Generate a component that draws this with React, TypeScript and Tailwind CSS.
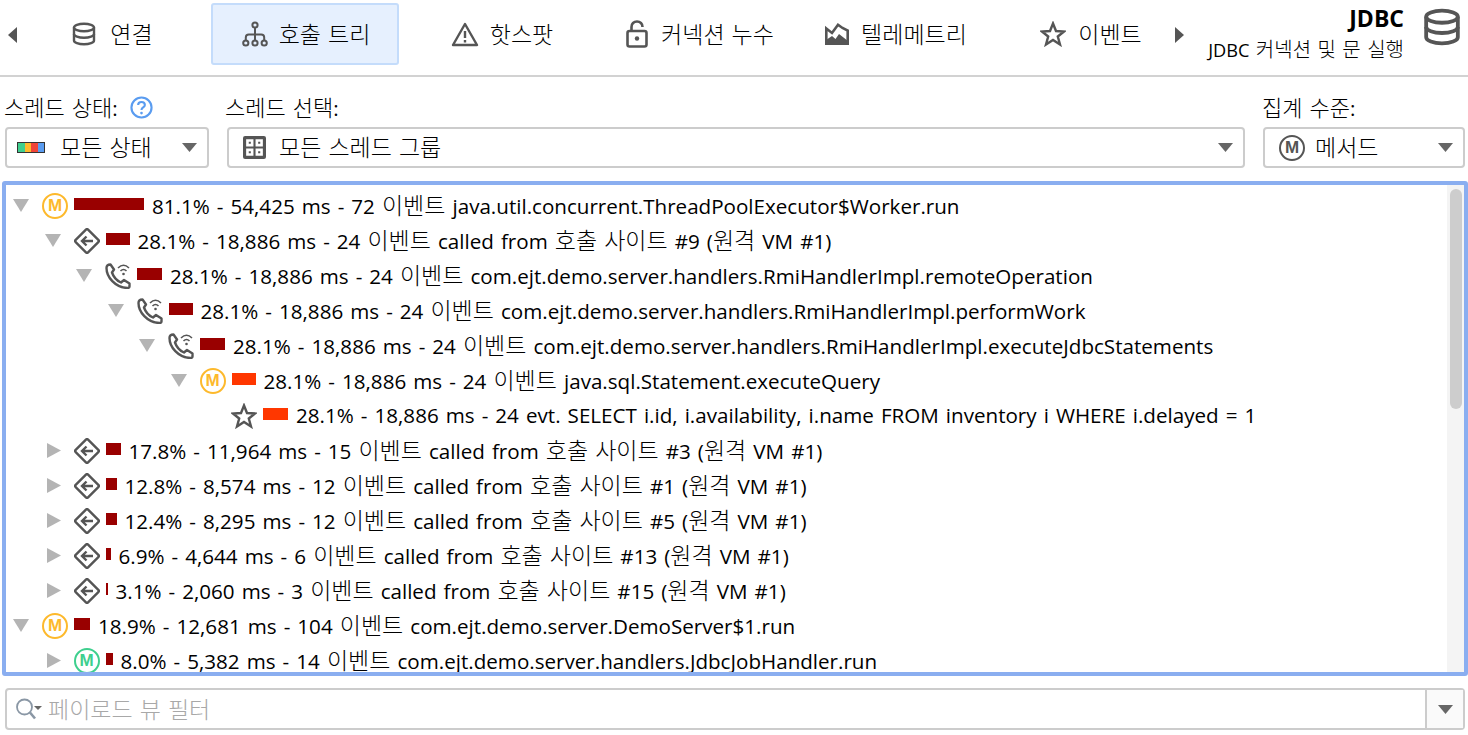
import React from "react";

const FONT = "[font-family:'Open_Sans','Noto_Sans_CJK_KR',sans-serif]";

// hangul runs are set larger than the latin text
function Ko({ text, size = "text-[23px]" }: { text: string; size?: string }): React.JSX.Element {
    const parts = text.split(/([\uac00-\ud7a3]+)/);
    return (
        <span>
            {parts.map((part, i) =>
                /[\uac00-\ud7a3]/.test(part) ? (
                    <span key={i} className={`${size} font-light`}>{part}</span>
                ) : (
                    <span key={i}>{part}</span>
                )
            )}
        </span>
    );
}

function Tri({ dir, className }: { dir: "down" | "right" | "left"; className: string }): React.JSX.Element {
    const pts = dir === "down" ? "0,0 16,0 8,16" : dir === "right" ? "0,0 16,8 0,16" : "16,0 0,8 16,16";
    return (
        <svg viewBox="0 0 16 16" preserveAspectRatio="none" className={className}>
            <polygon points={pts} fill="currentColor" />
        </svg>
    );
}

function DbIcon({ className }: { className: string }): React.JSX.Element {
    return (
        <svg viewBox="0 0 24 24" fill="none" stroke="currentColor" strokeWidth="2.4" className={className}>
            <ellipse cx="12" cy="5.5" rx="10" ry="3.8" />
            <path d="M2 5.5v13c0 2.1 4.5 3.8 10 3.8s10-1.7 10-3.8v-13" />
            <path d="M2 12c0 2.1 4.5 3.8 10 3.8s10-1.7 10-3.8" />
        </svg>
    );
}

function TreeIcon({ className }: { className: string }): React.JSX.Element {
    return (
        <svg viewBox="0 0 26 26" fill="none" stroke="currentColor" strokeWidth="2" className={className}>
            <circle cx="13" cy="4" r="2.6" />
            <circle cx="3.8" cy="22" r="2.6" />
            <circle cx="13" cy="22" r="2.6" />
            <circle cx="22.2" cy="22" r="2.6" />
            <path d="M13 7v12M3.8 19v-2.5c0-2 1-3 3-3h12.4c2 0 3 1 3 3V19" />
        </svg>
    );
}

function WarnIcon({ className }: { className: string }): React.JSX.Element {
    return (
        <svg viewBox="0 0 28 26" fill="none" className={className}>
            <path d="M14 3 L26 24 H2 Z" stroke="currentColor" strokeWidth="2.4" strokeLinejoin="round" />
            <path d="M14 10v7M14 19v2.6" stroke="currentColor" strokeWidth="2.4" />
        </svg>
    );
}

function LockIcon({ className }: { className: string }): React.JSX.Element {
    return (
        <svg viewBox="0 0 22 28" fill="none" stroke="currentColor" strokeWidth="2.6" className={className}>
            <rect x="1.5" y="11" width="19" height="15.5" rx="2" />
            <path d="M5.5 11V7c0-3.4 2.3-5.5 5.5-5.5s5.5 2.1 5.5 5.500" />
            <circle cx="11" cy="18.5" r="2.2" fill="currentColor" stroke="none" />
        </svg>
    );
}

function TelemetryIcon({ className }: { className: string }): React.JSX.Element {
    return (
        <svg viewBox="0 0 24 22" className={className}>
            <path fill="none" stroke="currentColor" strokeWidth="2.6" d="M1.300 5.500 7 10 13 1.800 17.500 5 22.700 7.500V20.700H1.300Z" />
            <path fill="currentColor" d="M1 21v-4l6-4 3.500 3L14 11l9 7v3Z" />
        </svg>
    );
}

function StarIcon({ className }: { className: string }): React.JSX.Element {
    return (
        <svg viewBox="0 0 26 26" fill="none" stroke="currentColor" strokeWidth="2.4" strokeLinejoin="miter" className={className}>
            <polygon points="13,2.500 16,10 24,10.500 17.800,15.500 20,23.500 13,19 6,23.500 8.200,15.500 2,10.500 10,10" />
        </svg>
    );
}

function MethodIcon({ className }: { className: string }): React.JSX.Element {
    return (
        <span className={`flex h-[26px] w-[26px] items-center justify-center rounded-full border-[2.5px] [font-family:'Liberation_Sans',sans-serif] text-[17px] font-bold ${className}`}>
            M
        </span>
    );
}

function CallSiteIcon({ className }: { className: string }): React.JSX.Element {
    return (
        <svg viewBox="0 0 26 26" fill="none" stroke="currentColor" strokeWidth="2.4" className={className}>
            <rect x="4.250" y="4.250" width="17.500" height="17.500" rx="1.500" transform="rotate(45 13 13)" />
            <path d="M19 13H8M12.500 8.500 8 13l4.500 4.500" />
        </svg>
    );
}

function PhoneWifiIcon({ className }: { className: string }): React.JSX.Element {
    return (
        <svg viewBox="0 0 26 26" fill="none" stroke="currentColor" className={className}>
            <path
                strokeWidth="2.400"
                strokeLinejoin="round"
                d="M5.500 1.500 9 6.500 7 9.500c1.500 4.500 4.500 8 9 10l3-2.500 5.500 3.500v3c0 1-1 1.500-2 1.500C10 24.500 1.500 14 1.500 5c0-2 1.500-3.500 4-3.500Z"
            />
            <path strokeWidth="1.600" d="M13 5c3.500-3.500 7.500-3.500 11 0M15.500 8c2-2 4-2 6 0" />
            <circle cx="18.500" cy="11" r="1.300" fill="currentColor" stroke="none" />
        </svg>
    );
}

const tabs = [
    { label: "연결", icon: <DbIcon className="h-[24px] w-[24px]" />, w: "w-[188px] pl-[7px]", gap: "gap-[14px]" },
    { label: "호출 트리", icon: <TreeIcon className="h-[26px] w-[26px]" />, w: "w-[188px] pl-[2px]", gap: "gap-[11px]", active: true },
    { label: "핫스팟", icon: <WarnIcon className="h-[26px] w-[28px]" />, w: "w-[188px] pl-[2px]", gap: "gap-[11px]" },
    { label: "커넥션 누수", icon: <LockIcon className="h-[28px] w-[22px]" />, w: "w-[188px] pl-[6px]", gap: "gap-[13px]" },
    { label: "텔레메트리", icon: <TelemetryIcon className="h-[22px] w-[24px]" />, w: "w-[188px] pl-[6px]", gap: "gap-[12px]" },
    { label: "이벤트", icon: <StarIcon className="h-[26px] w-[26px]" />, w: "w-[176px] pl-[16px]", gap: "gap-[12px]" },
];

type Row = {
    depth: number;
    open?: boolean;
    leaf?: boolean;
    icon: "mo" | "mg" | "site" | "phone" | "star";
    bar: number;
    hot?: boolean;
    text: string;
};

const rows: Row[] = [
    { depth: 0, open: true, icon: "mo", bar: 70, text: "81.1% - 54,425 ms - 72 이벤트 java.util.concurrent.ThreadPoolExecutor$Worker.run" },
    { depth: 1, open: true, icon: "site", bar: 24, text: "28.1% - 18,886 ms - 24 이벤트 called from 호출 사이트 #9 (원격 VM #1)" },
    { depth: 2, open: true, icon: "phone", bar: 25, text: "28.1% - 18,886 ms - 24 이벤트 com.ejt.demo.server.handlers.RmiHandlerImpl.remoteOperation" },
    { depth: 3, open: true, icon: "phone", bar: 24, text: "28.1% - 18,886 ms - 24 이벤트 com.ejt.demo.server.handlers.RmiHandlerImpl.performWork" },
    { depth: 4, open: true, icon: "phone", bar: 25, text: "28.1% - 18,886 ms - 24 이벤트 com.ejt.demo.server.handlers.RmiHandlerImpl.executeJdbcStatements" },
    { depth: 5, open: true, icon: "mo", bar: 24, hot: true, text: "28.1% - 18,886 ms - 24 이벤트 java.sql.Statement.executeQuery" },
    { depth: 6, leaf: true, icon: "star", bar: 25, hot: true, text: "28.1% - 18,886 ms - 24 evt. SELECT i.id, i.availability, i.name FROM inventory i WHERE i.delayed = 1" },
    { depth: 1, icon: "site", bar: 15, text: "17.8% - 11,964 ms - 15 이벤트 called from 호출 사이트 #3 (원격 VM #1)" },
    { depth: 1, icon: "site", bar: 11, text: "12.8% - 8,574 ms - 12 이벤트 called from 호출 사이트 #1 (원격 VM #1)" },
    { depth: 1, icon: "site", bar: 11, text: "12.4% - 8,295 ms - 12 이벤트 called from 호출 사이트 #5 (원격 VM #1)" },
    { depth: 1, icon: "site", bar: 5, text: "6.9% - 4,644 ms - 6 이벤트 called from 호출 사이트 #13 (원격 VM #1)" },
    { depth: 1, icon: "site", bar: 2, text: "3.1% - 2,060 ms - 3 이벤트 called from 호출 사이트 #15 (원격 VM #1)" },
    { depth: 0, open: true, icon: "mo", bar: 16, text: "18.9% - 12,681 ms - 104 이벤트 com.ejt.demo.server.DemoServer$1.run" },
    { depth: 1, icon: "mg", bar: 7, text: "8.0% - 5,382 ms - 14 이벤트 com.ejt.demo.server.handlers.JdbcJobHandler.run" },
];

function RowIcon({ icon }: { icon: Row["icon"] }): React.JSX.Element {
    if (icon === "mo") return <MethodIcon className="border-[#fdb92c] text-[#fdb92c]" />;
    if (icon === "mg") return <MethodIcon className="border-[#3ecf8e] text-[#3ecf8e]" />;
    if (icon === "site") return <CallSiteIcon className="h-[26px] w-[26px] text-[#555]" />;
    if (icon === "phone") return <PhoneWifiIcon className="h-[26px] w-[26px] text-[#555]" />;
    return <StarIcon className="h-[26px] w-[26px] text-[#555]" />;
}

function Combo({ className, children }: { className: string; children: React.ReactNode }): React.JSX.Element {
    return (
        <div className={`flex h-[41px] items-center rounded-[4px] border-2 border-[#ccc] bg-white ${className}`}>
            {children}
            <Tri dir="down" className="ml-auto mr-[10px] h-[9px] w-[15px] text-[#666]" />
        </div>
    );
}

export default function App(): React.JSX.Element {
    return (
        <div className={`flex h-[735px] w-[1468px] flex-col overflow-hidden bg-white text-[20.6px] [word-spacing:1.7px] text-black ${FONT}`}>
            <div className="flex h-[77px] shrink-0 items-start border-b-2 border-[#d2d2d2] pt-[3px]">
                <Tri dir="left" className="ml-[8px] mt-[24px] h-[16px] w-[9px] shrink-0 text-[#555]" />
                <div className="-ml-[2px] flex gap-[8px]">
                    {tabs.map((tab) => (
                        <div
                            key={tab.label}
                            className={`flex h-[62px] items-center justify-center rounded-[3px] border-2 ${tab.gap} ${tab.w} ${tab.active ? "border-[#c4dcfb] bg-[#e6f0fe]" : "border-transparent"}`}
                        >
                            <span className="flex text-[#555]">{tab.icon}</span>
                            <span className="leading-none"><Ko text={tab.label} /></span>
                        </div>
                    ))}
                </div>
                <Tri dir="right" className="ml-[4px] mt-[24px] h-[16px] w-[9px] shrink-0 text-[#555]" />
                <div className="ml-auto flex flex-col items-end">
                    <span className="text-[23px] font-bold leading-[30px]">JDBC</span>
                    <span className="mt-[2px] text-[18.2px] leading-[30px]"><Ko text="JDBC 커넥션 및 문 실행" size="text-[20px]" /></span>
                </div>
                <DbIcon className="ml-[19px] mr-[7px] mt-[5px] h-[38px] w-[38px] shrink-0 text-[#555]" />
            </div>

            <div className="flex shrink-0 gap-[18px] pl-[5px] pr-[3px] pt-[15px]">
                <div className="flex w-[204px] flex-col">
                    <div className="-ml-[1px] flex h-[35px] items-start gap-[12px] leading-[30px]">
                        <Ko text="스레드 상태:" size="text-[22px]" />
                        <svg viewBox="0 0 24 24" className="mt-[4px] h-[23px] w-[23px] text-[#5a9cf0]" fill="none" stroke="currentColor" strokeWidth="2.2">
                            <circle cx="12" cy="12" r="10.500" />
                            <path d="M8.500 9.500c0-2 1.500-3.200 3.500-3.200s3.500 1.200 3.500 3c0 2.700-3.500 2.500-3.500 5.200" />
                            <circle cx="12" cy="17.800" r="1.400" fill="currentColor" stroke="none" />
                        </svg>
                    </div>
                    <Combo className="w-[204px] pl-[10px]">
                        <span className="mr-[15px] flex h-[11px] w-[28px] border border-[#333]">
                            <span className="flex-1 bg-[#3ecf8e]" />
                            <span className="flex-1 bg-[#fdb92c]" />
                            <span className="flex-1 bg-[#f04438]" />
                            <span className="flex-1 bg-[#5a9cf0]" />
                        </span>
                        <Ko text="모든 상태" />
                    </Combo>
                </div>
                <div className="flex flex-1 flex-col">
                    <div className="-ml-[2px] h-[35px] leading-[30px]"><Ko text="스레드 선택:" size="text-[22px]" /></div>
                    <Combo className="pl-[14px]">
                        <svg viewBox="0 0 22 22" className="mr-[13px] h-[23px] w-[23px] text-[#555]">
                            <path
                                fill="currentColor"
                                fillRule="evenodd"
                                d="M2 0h18a2 2 0 0 1 2 2v18a2 2 0 0 1-2 2H2a2 2 0 0 1-2-2V2a2 2 0 0 1 2-2ZM3 3v7h7V3Zm9 0v7h7V3ZM3 12v7h7v-7Zm9 0v7h7v-7ZM5.500 5.500h2v2h-2Zm9 0h2v2h-2ZM5.500 14.500h2v2h-2Zm9 0h2v2h-2Z"
                            />
                        </svg>
                        <Ko text="모든 스레드 그룹" />
                    </Combo>
                </div>
                <div className="flex w-[202px] flex-col">
                    <div className="-ml-[1px] h-[35px] leading-[30px]"><Ko text="집계 수준:" size="text-[22px]" /></div>
                    <Combo className="pl-[14px]">
                        <span className="mr-[10px] flex h-[26px] w-[26px] items-center justify-center rounded-full border-[2.5px] border-[#555] [font-family:'Liberation_Sans',sans-serif] text-[17px] font-bold text-[#555]">M</span>
                        <Ko text="메서드" />
                    </Combo>
                </div>
            </div>

            <div className="ml-[2px] mt-[13px] flex h-[495px] w-[1466px] shrink-0 overflow-hidden rounded-[3px] border-[4px] border-[#8aaef0]">
                <div className="flex-1 overflow-hidden pt-[3px]">
                    {rows.map((row, i) => (
                        <div key={i} className="flex h-[35px] items-center whitespace-nowrap" style={{ paddingLeft: 7 + row.depth * 31.5 }}>
                            {row.leaf ? (
                                <span className="h-[16px] w-[16px] shrink-0" />
                            ) : row.open ? (
                                <Tri dir="down" className="h-[13px] w-[16px] shrink-0 text-[#b4b4b4]" />
                            ) : (
                                <Tri dir="right" className="ml-[2px] h-[15px] w-[14px] shrink-0 text-[#b4b4b4]" />
                            )}
                            <span className="ml-[13px] flex shrink-0"><RowIcon icon={row.icon} /></span>
                            <span
                                className={`ml-[6px] mb-[3px] h-[12px] shrink-0 ${row.hot ? "bg-[#ff3700]" : "bg-[#990000]"}`}
                                style={{ width: row.bar }}
                            />
                            <span className="ml-[8px]"><Ko text={row.text} /></span>
                        </div>
                    ))}
                </div>
                <div className="flex w-[17px] shrink-0 justify-center bg-[#f4f4f4] pt-[4px]">
                    <div className="h-[220px] w-[12px] rounded-full bg-[#cdcdcd]" />
                </div>
            </div>

            <div className="ml-[5px] mt-[12px] flex h-[42px] w-[1460px] shrink-0 items-center rounded-[4px] border-2 border-[#ccc]">
                <div className="flex flex-1 items-center pl-[8px]">
                    <svg viewBox="0 0 28 24" className="h-[24px] w-[28px] text-[#8a97a5]" fill="none" stroke="currentColor" strokeWidth="1.800">
                        <circle cx="9.500" cy="10" r="7.500" />
                        <path d="M15 15.500l5 6" strokeWidth="2.600" />
                        <polygon points="19,9 27,9 23,13" fill="#666" stroke="none" />
                    </svg>
                    <span className="ml-[5px] mt-[1px] text-[#a8a8a8]"><Ko text="페이로드 뷰 필터" /></span>
                </div>
                <div className="flex h-full w-[38px] items-center justify-center border-l-2 border-[#ccc] bg-[#fafafa]">
                    <Tri dir="down" className="h-[9px] w-[15px] text-[#666]" />
                </div>
            </div>
        </div>
    );
}
